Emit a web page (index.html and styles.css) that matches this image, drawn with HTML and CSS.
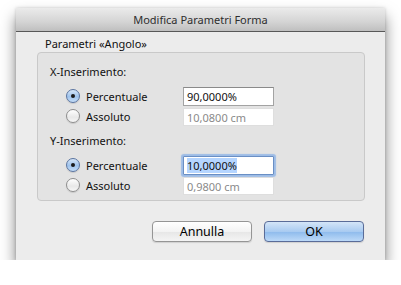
FILE: index.html
```html
<!DOCTYPE html>
<html lang="it">
<head>
<meta charset="utf-8">
<title>Modifica Parametri Forma</title>
<link rel="stylesheet" href="styles.css">
</head>
<body>

<div class="window">
  <div class="titlebar">Modifica Parametri Forma</div>

  <div class="content">
    <div class="group-label">Parametri «Angolo»</div>

    <div class="group">
      <div class="section-label">X-Inserimento:</div>
      <div class="row">
        <span class="radio checked"></span>
        <span class="radio-label">Percentuale</span>
        <span class="field">90,0000%</span>
      </div>
      <div class="row">
        <span class="radio"></span>
        <span class="radio-label">Assoluto</span>
        <span class="field disabled">10,0800 cm</span>
      </div>

      <div class="section-label second">Y-Inserimento:</div>
      <div class="row">
        <span class="radio checked"></span>
        <span class="radio-label">Percentuale</span>
        <span class="field focused"><span class="selection">10,0000%</span></span>
      </div>
      <div class="row">
        <span class="radio"></span>
        <span class="radio-label">Assoluto</span>
        <span class="field disabled">0,9800 cm</span>
      </div>
    </div>

    <div class="buttons">
      <button class="btn">Annulla</button>
      <button class="btn default">OK</button>
    </div>
  </div>
</div>

</body>
</html>
```

FILE: styles.css
```css
body {
  margin: 0;
  background: #ffffff;
  font-family: "Noto Sans", "DejaVu Sans", sans-serif;
  font-size: 11px;
  color: #111;
}
.window {
  margin: 8px 0 0 16px;
  width: 369px;
  height: 252px;
  background: #ececec;
  box-shadow: 0 9px 14px rgba(0,0,0,0.5), 0 0 3px rgba(0,0,0,0.18);
  display: flex;
  flex-direction: column;
}
.titlebar {
  height: 23px;
  line-height: 24px;
  text-align: center;
  color: #2e2e2e;
  background: linear-gradient(#ebebeb, #d4d4d4 60%, #bfbfbf);
  border-bottom: 1px solid #585858;
}
.content {
  padding: 5px 20px 0 21px;
}
.group-label {
  margin-left: 8px;
  line-height: 14px;
  margin-bottom: 1px;
}
.group {
  height: 149px;
  box-sizing: border-box;
  padding: 12px 0 0 0;
  background: #e3e3e3;
  border: 1px solid #c9c9c9;
  border-radius: 4px;
}
.section-label {
  margin-left: 12px;
  line-height: 14px;
  margin-bottom: 7px;
}
.section-label.second {
  margin-top: 8px;
}
.row {
  display: flex;
  align-items: center;
  height: 20px;
}
.radio {
  box-sizing: border-box;
  width: 14px;
  height: 14px;
  margin-left: 28px;
  border-radius: 50%;
  border: 1px solid #8e8e8e;
  background: linear-gradient(#ffffff, #e8e8e8 60%, #f7f7f7);
  box-shadow: 0 1px 1px rgba(0,0,0,0.12);
  display: flex;
  align-items: center;
  justify-content: center;
}
.radio.checked {
  border-color: #5a74a0;
  background: linear-gradient(#d6e6f8, #9fc3ec 55%, #c4ddf8);
}
.radio.checked::after {
  content: "";
  width: 4px;
  height: 4px;
  border-radius: 50%;
  background: #1a1a1a;
}
.radio-label {
  width: 97px;
  margin-left: 6px;
}
.field {
  box-sizing: border-box;
  width: 91px;
  height: 19px;
  line-height: 17px;
  padding-left: 3px;
  background: #fff;
  border: 1px solid #a3a3a3;
  border-top-color: #8a8a8a;
}
.field.disabled {
  height: 18px;
  color: #8a8a8a;
  border-color: #dedede;
  margin-top: 1px;
}
.field.focused {
  border-color: #6a8fc4;
  box-shadow: 0 0 1px 2px #9dbce6;
  border-radius: 1px;
}
.selection {
  background: #b5d5ff;
}
.buttons {
  display: flex;
  justify-content: flex-end;
  gap: 12px;
  margin-top: 20px;
  padding-right: 1px;
}
.btn {
  width: 100px;
  height: 21px;
  padding: 0;
  font-family: "Noto Sans", "DejaVu Sans", sans-serif;
  font-size: 12.5px;
  color: #000;
  border: 1px solid #959595;
  border-radius: 4px;
  background: linear-gradient(#ffffff, #f3f3f3 50%, #e6e6e6 51%, #f4f4f4);
  box-shadow: 0 1px 1px rgba(0,0,0,0.12);
}
.btn.default {
  border-color: #5a6c98;
  background: linear-gradient(#d4e5f8, #a9cbf1 50%, #8dbaec 51%, #bcd9f8);
}
```
